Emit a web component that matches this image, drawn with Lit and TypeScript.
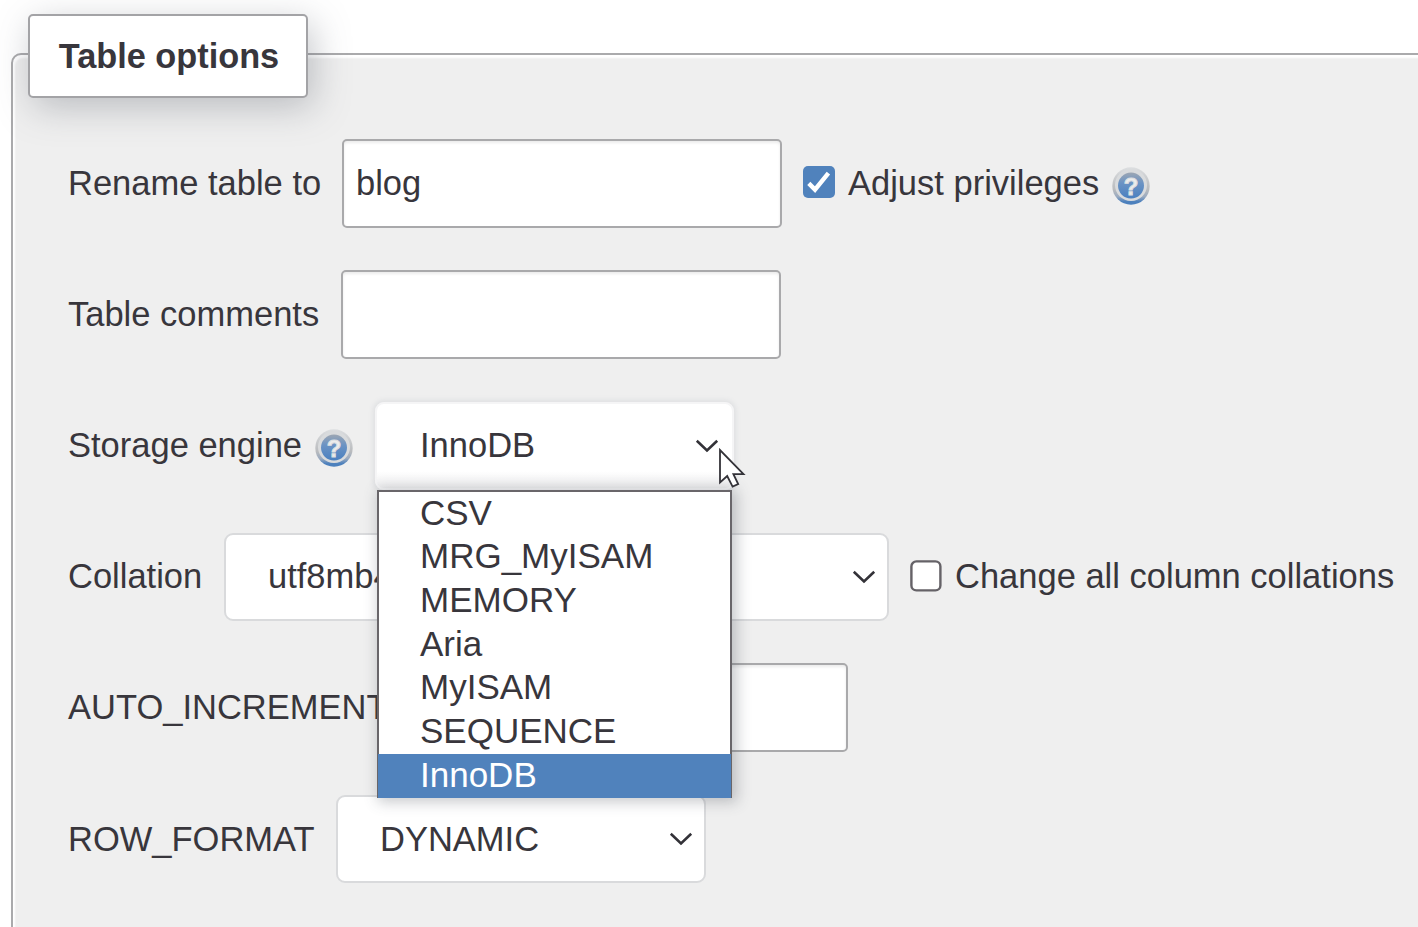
import { LitElement, html, css } from "lit";
import { customElement } from "lit/decorators.js";
import { classMap } from "lit/directives/class-map.js";

const ENGINES = ["CSV", "MRG_MyISAM", "MEMORY", "Aria", "MyISAM", "SEQUENCE", "InnoDB"];

@customElement("help-icon")
class HelpIcon extends LitElement {
  static styles = css`
    :host { display: block; width: 40px; height: 40px; flex: none; }
    svg { display: block; }
    .mark { font: bold 24px "Liberation Sans", Arial, sans-serif; fill: #eceded; stroke: #dcdee0; stroke-width: 1px; }
  `;
  render() {
    return html`<svg width="40" height="40" viewBox="0 0 40 40">
      <defs>
        <linearGradient id="rim" x1="0" y1="0" x2="0" y2="1">
          <stop offset="0" stop-color="#dcdee0" />
          <stop offset="0.6" stop-color="#b9bbbe" />
          <stop offset="0.78" stop-color="#9babc0" />
          <stop offset="0.92" stop-color="#4c80bd" />
        </linearGradient>
        <linearGradient id="core" x1="0" y1="0" x2="0" y2="1">
          <stop offset="0" stop-color="#9ca6b3" />
          <stop offset="0.4" stop-color="#6b93c4" />
          <stop offset="1" stop-color="#4a80c0" />
        </linearGradient>
      </defs>
      <circle cx="20" cy="20" r="18.7" fill="url(#rim)" />
      <circle cx="20" cy="19" r="16" fill="#d9dbdd" />
      <circle cx="20" cy="19.6" r="13" fill="url(#core)" />
      <text class="mark" x="20" y="28.5" text-anchor="middle">?</text>
    </svg>`;
  }
}

@customElement("select-box")
class SelectBox extends LitElement {
  static properties = { value: {} };
  declare value: string;
  static styles = css`
    :host {
      display: flex; align-items: center; justify-content: space-between; box-sizing: border-box;
      height: 88px; padding: 0 11px 0 42px; border: 2px solid #d9dadc; border-radius: 9px;
      background: #fff; overflow: hidden; white-space: nowrap; flex: none;
    }
    :host([open]) {
      padding: 0 13px 0 43px;
      border-color: #f5f5f6; box-shadow: 0 0 5px 2px #dfe0e2;
      background: linear-gradient(#fff 80%, #ededee);
    }
    .value { padding-bottom: 1px; }
    svg { display: block; flex: none; }
  `;
  render() {
    return html`<span class="value">${this.value}</span>
      <svg width="24" height="16" viewBox="0 0 24 16">
        <path d="M1.8 2.8 L12 12.4 L22.2 2.8" fill="none" stroke="#333238" stroke-width="2.6" />
      </svg>`;
  }
}

@customElement("app-root")
class AppRoot extends LitElement {
  static styles = css`
    :host {
      display: block; position: relative; width: 1418px; height: 927px; overflow: hidden; background: #fff;
      font: 34.5px/44px "Liberation Sans", Arial, sans-serif; color: #38363c;
    }
    * { box-sizing: border-box; }
    .page { display: flow-root; }
    .legend {
      position: relative; z-index: 1; width: 280px; height: 84px; margin: 14px 0 0 28px;
      display: flex; align-items: center; justify-content: center; padding: 0 0 1px 2px;
      background: #fff; border: 2px solid #a3a3a6; border-radius: 5px; font-weight: bold; font-size: 34.3px;
      white-space: nowrap; box-shadow: 5px 9px 36px rgba(85, 92, 104, 0.34);
    }
    .panel {
      width: 1440px; height: 900px; margin: -45px 0 0 11px; padding: 84px 0 0 55px;
      border: 2px solid #aaaaac; border-radius: 10px; background: #efefef;
      box-shadow: inset 2px 3px 2px #fff;
      display: flex; flex-direction: column; gap: 42.8px;
    }
    .row { display: flex; align-items: center; height: 88.4px; white-space: nowrap; flex: none; }
    .label { flex: none; padding-bottom: 1px; }
    .rename { width: 274px; }
    .comments { width: 273px; }
    .engine { width: 246px; }
    .collation { width: 156px; }
    .auto { width: 337px; }
    .format { width: 268px; }
    .field {
      width: 440px; height: 89px; flex: none; border: 2px solid #a9a9ab; border-radius: 5px; background: #fff;
      box-shadow: inset 0 2px 3px #ececec; padding: 20px 12px; line-height: 44px;
    }
    .field.short { width: 443px; }
    .engine-help { margin: 4px 21px 0 0; }
    .priv-help { margin: 6px 0 0 12px; }
    .anchor { position: relative; flex: none; }
    .w-engine { width: 359px; }
    .w-collation { width: 665px; }
    .w-format { width: 370px; }
    .check { display: block; flex: none; margin: 0 13px 0 20px; }
    .list {
      position: absolute; z-index: 2; left: 2px; top: 88px; width: 355px; height: 308px;
      border: 2px solid #69666a; border-bottom: 0; background: #fff; font-size: 35px;
      box-shadow: 3px 2px 13px 2px rgba(70, 75, 85, 0.3);
    }
    .option { height: 43.7px; line-height: 41px; padding-left: 41px; }
    .option.selected { background: #5082bc; color: #fff; margin: 0 -1px; padding-left: 42px; height: 44px; }
    .cursor { position: absolute; z-index: 3; left: 343px; top: 46px; }
  `;

  private check(on: boolean) {
    return html`<svg class="check" width="33" height="34" viewBox="0 0 33 34">
      ${on
        ? html`<svg width="33" height="34"><rect x="1" y="0" width="32" height="32" rx="5" fill="#5082bc" />
            <path d="M6.8 17.4 L13 23.6 L26.4 7.2" fill="none" stroke="#fff" stroke-width="4.4" /></svg>`
        : html`<svg width="33" height="34"><rect x="2.4" y="1.4" width="29" height="29" rx="5" fill="#fff" stroke="#656267" stroke-width="2.4" /></svg>`}
    </svg>`;
  }

  render() {
    return html`<div class="page">
      <div class="legend">Table options</div>
      <div class="panel">
        <div class="row">
          <span class="label rename">Rename table to</span>
          <div class="field">blog</div>
          ${this.check(true)}
          <span class="label">Adjust privileges</span>
          <help-icon class="priv-help"></help-icon>
        </div>
        <div class="row">
          <span class="label comments">Table comments</span>
          <div class="field"></div>
        </div>
        <div class="row">
          <span class="label engine">Storage engine</span>
          <help-icon class="engine-help"></help-icon>
          <div class="anchor">
            <select-box class="w-engine" open .value=${"InnoDB"}></select-box>
            <div class="list">
              ${ENGINES.map((e) => html`<div class=${classMap({ option: true, selected: e === "InnoDB" })}>${e}</div>`)}
            </div>
            <svg class="cursor" width="30" height="42" viewBox="0 0 30 42">
              <path d="M2 2 L2 34.5 L9.2 28 L14.6 38.6 L20.2 36 L15.4 26.2 L25.5 26.2 Z" fill="#fff" stroke="#333238" stroke-width="1.8" />
            </svg>
          </div>
        </div>
        <div class="row">
          <span class="label collation">Collation</span>
          <select-box class="w-collation" .value=${"utf8mb4"}></select-box>
          ${this.check(false)}
          <span class="label">Change all column collations</span>
        </div>
        <div class="row">
          <span class="label auto">AUTO_INCREMENT</span>
          <div class="field short"></div>
        </div>
        <div class="row">
          <span class="label format">ROW_FORMAT</span>
          <select-box class="w-format" .value=${"DYNAMIC"}></select-box>
        </div>
      </div>
    </div>`;
  }
}
